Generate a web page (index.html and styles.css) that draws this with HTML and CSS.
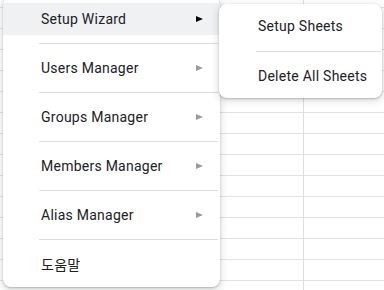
FILE: index.html
```html
<!DOCTYPE html>
<html>
<head>
    <title>Menu</title>
    <link rel="stylesheet" href="styles.css">
</head>
<body>
    <div class="sheet"></div>

    <div class="menu main-menu">
        <div class="menu-item active">
            <span class="label">Setup Wizard</span>
            <span class="arrow"></span>
        </div>
        <div class="separator"></div>
        <div class="menu-item">
            <span class="label">Users Manager</span>
            <span class="arrow"></span>
        </div>
        <div class="separator"></div>
        <div class="menu-item">
            <span class="label">Groups Manager</span>
            <span class="arrow"></span>
        </div>
        <div class="separator"></div>
        <div class="menu-item">
            <span class="label">Members Manager</span>
            <span class="arrow"></span>
        </div>
        <div class="separator"></div>
        <div class="menu-item">
            <span class="label">Alias Manager</span>
            <span class="arrow"></span>
        </div>
        <div class="separator"></div>
        <div class="menu-item">
            <span class="label">도움말</span>
        </div>
    </div>

    <div class="menu sub-menu">
        <div class="menu-item">
            <span class="label">Setup Sheets</span>
        </div>
        <div class="separator"></div>
        <div class="menu-item">
            <span class="label">Delete All Sheets</span>
        </div>
    </div>
</body>
</html>
```

FILE: styles.css
```css
body {
    margin: 0;
    width: 384px;
    height: 290px;
    overflow: hidden;
    position: relative;
    font-family: Roboto, 'Noto Sans CJK KR', sans-serif;
    font-size: 14px;
    letter-spacing: 0.25px;
    color: #202124;
    background-color: #ffffff;
}

/* spreadsheet grid behind the menus */
.sheet {
    height: 100%;
    background-image:
        linear-gradient(to right, transparent 303px, #dedede 303px, #dedede 304px, transparent 304px),
        repeating-linear-gradient(to bottom, transparent 0, transparent 7px, #e2e2e2 7px, #e2e2e2 8px, transparent 8px, transparent 21px);
}

.menu {
    position: absolute;
    background: #ffffff;
    border-radius: 8px;
    box-shadow: 0 2px 6px 2px rgba(60, 64, 67, 0.15), 0 1px 2px rgba(60, 64, 67, 0.3);
    padding: 6px 0;
}

.main-menu {
    left: 3px;
    top: -3px;
    width: 217px;
    padding-bottom: 7px;
}

.sub-menu {
    left: 219px;
    top: 4px;
    width: 163px;
    z-index: 2;
}

.menu-item {
    height: 32px;
    display: flex;
    align-items: center;
    justify-content: space-between;
    padding: 0 17px 0 38px;
}

.sub-menu .menu-item {
    padding-left: 39px;
}

.menu-item.active {
    background-color: #eff1f3;
}

.label {
    white-space: nowrap;
}

.arrow {
    width: 0;
    height: 0;
    border-left: 7px solid #9a9a9a;
    border-top: 3.5px solid transparent;
    border-bottom: 3.5px solid transparent;
}

.menu-item.active .arrow {
    border-left-color: #000000;
}

.separator {
    height: 1px;
    margin: 8px 2px 8px 36px;
    background-color: #dadce0;
}

.sub-menu .separator {
    margin: 9px 1px 8px 37px;
}
```
